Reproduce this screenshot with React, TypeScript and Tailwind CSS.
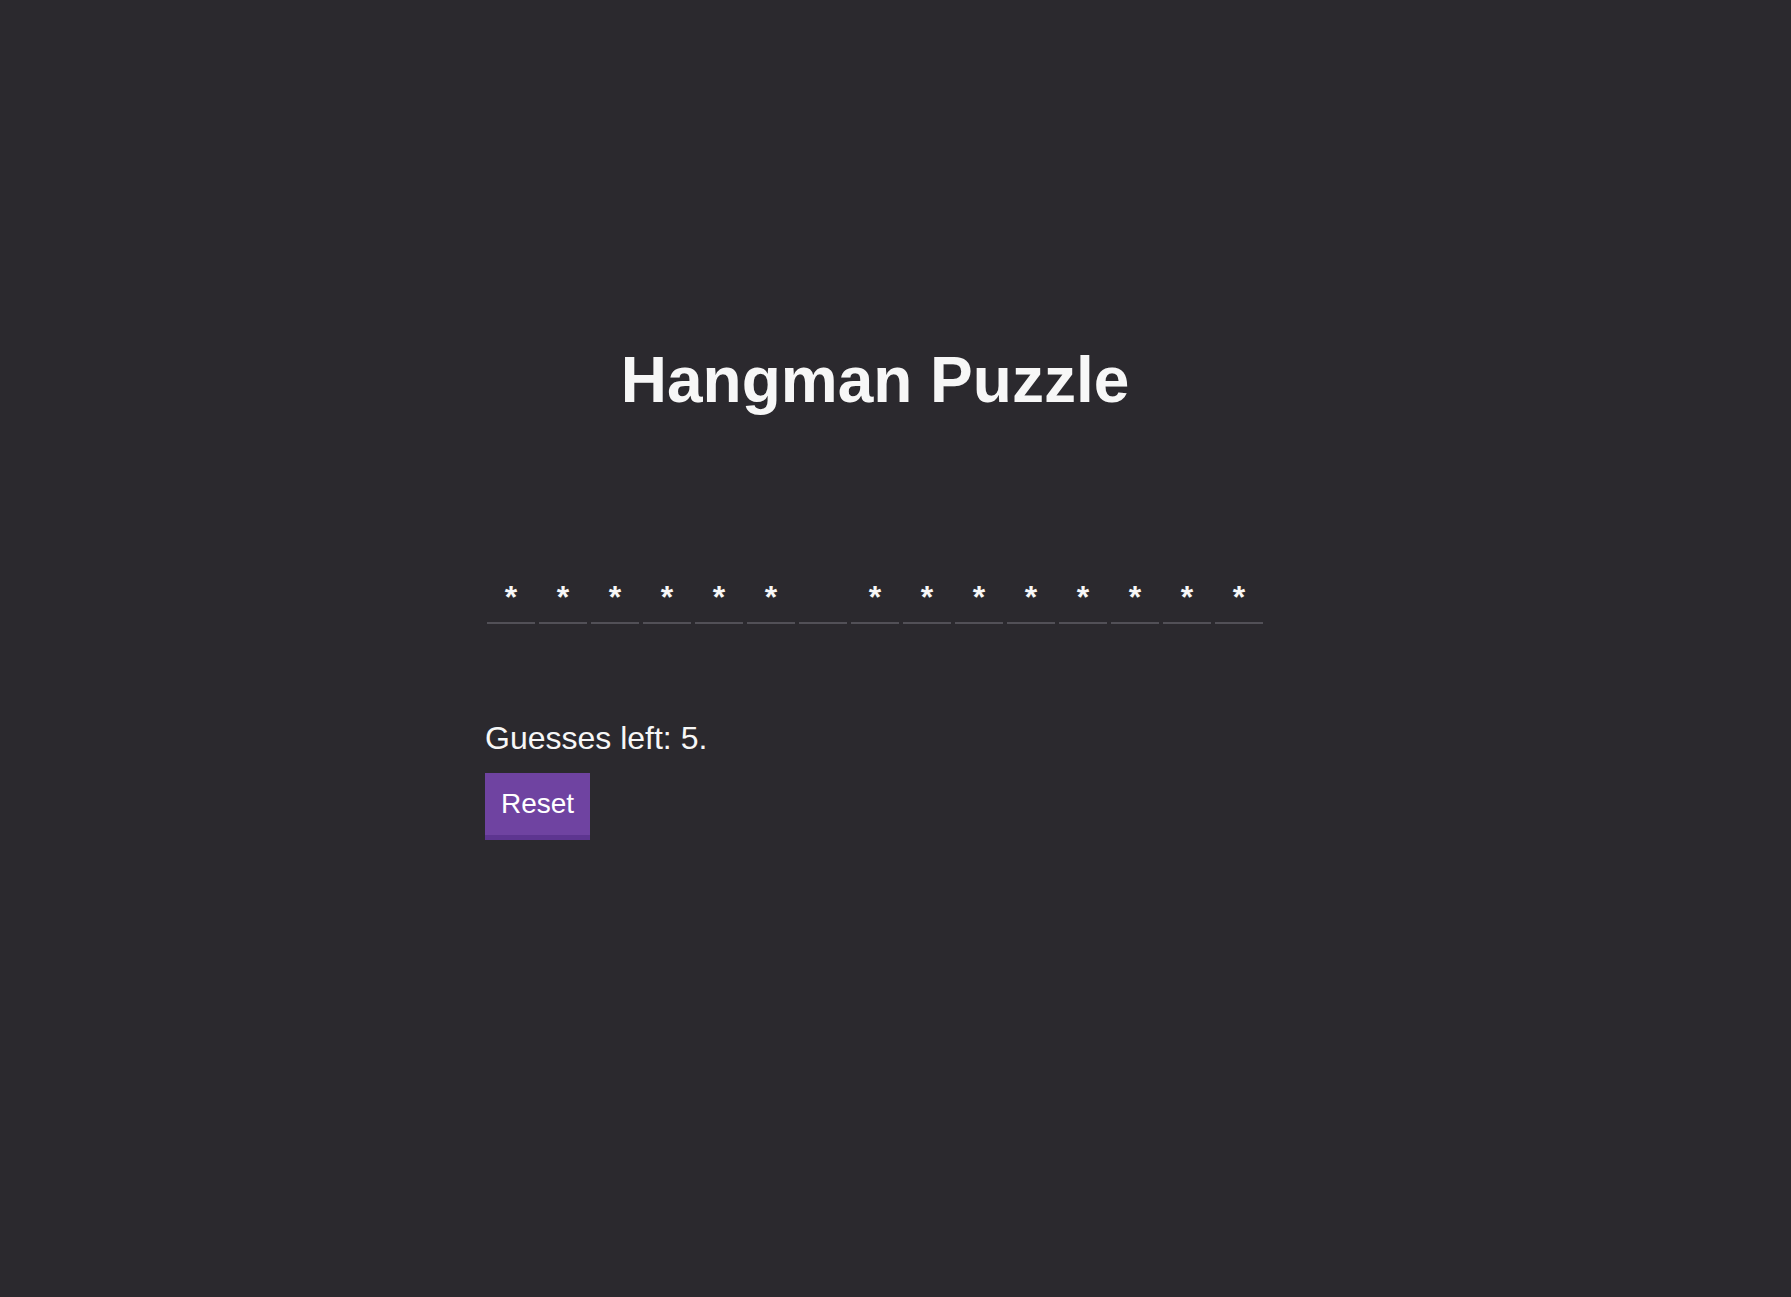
import React, { useState } from "react";

const PHRASE = "secret password";
const MAX_GUESSES = 5;

const App: React.FC = () => {
  const [guessed, setGuessed] = useState<string[]>([]);
  const [guessesLeft, setGuessesLeft] = useState(MAX_GUESSES);

  const handleReset = () => {
    setGuessed([]);
    setGuessesLeft(MAX_GUESSES);
  };

  return (
    <div
      className="min-h-screen w-full bg-[#2b292e] text-[#f7f7f7]"
      style={{ fontFamily: '"Liberation Sans", Arial, sans-serif' }}
    >
      <div className="ml-[485px] w-[780px] pt-[343px]">
        <h1 className="text-center text-[64px] font-bold leading-[74px]">
          Hangman Puzzle
        </h1>

        <div className="mt-[164px] flex">
          {PHRASE.split("").map((ch, i) => (
            <span
              key={i}
              className="mx-[2px] w-12 border-b-2 border-[#525057] pb-[9px] text-center text-[32px] font-bold leading-[32px]"
            >
              {ch === " " ? "\u00a0" : guessed.includes(ch) ? ch : "*"}
            </span>
          ))}
        </div>

        <p className="mt-[96px] text-[32px] leading-[36px]">
          Guesses left: {guessesLeft}.
        </p>

        <button
          onClick={handleReset}
          className="mt-[17px] border-b-[5px] border-[#5d3590] bg-[#6f43a1] px-4 pt-[15px] pb-[15px] text-[28px] leading-[32px] text-white"
        >
          Reset
        </button>
      </div>
    </div>
  );
};

export default App;
